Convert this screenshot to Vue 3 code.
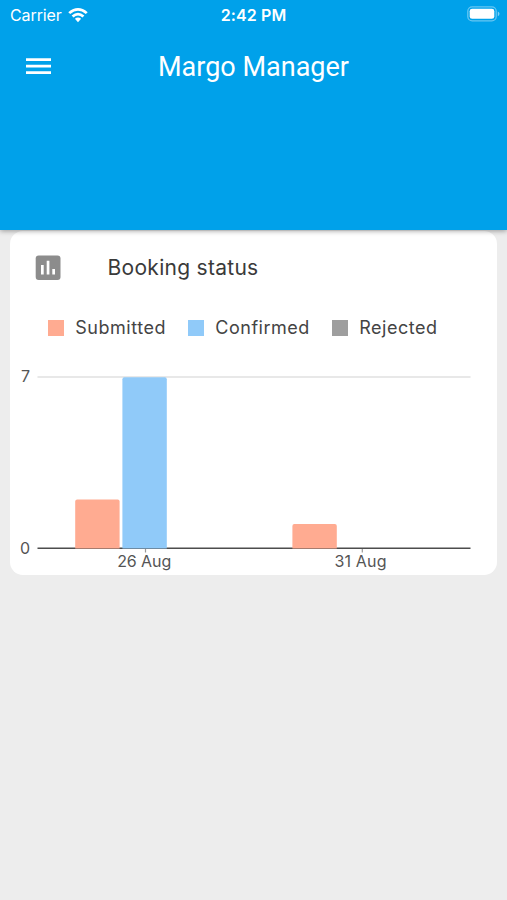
<script setup>
const legend = [
  { name: 'Submitted', color: '#ffab91' },
  { name: 'Confirmed', color: '#90caf9' },
  { name: 'Rejected', color: '#9e9e9e' },
]
const baseline = 181.5
const unit = 24.45
const bars = [
  { x: 65.2, value: 2, color: '#ffab91' },
  { x: 112.4, value: 7, color: '#90caf9' },
  { x: 282.4, value: 1, color: '#ffab91' },
]
const ticks = [
  { x: 135.5, label: '26 Aug', textX: 107.2, width: 54 },
  { x: 352.3, label: '31 Aug', textX: 324.5, width: 52 },
]
function barPath(b) {
  const h = b.value * unit
  return `M${b.x} ${baseline}v${2 - h}q0 -2 2 -2h40.4q2 0 2 2v${h - 2}z`
}
</script>

<template>
  <div class="screen">
    <header class="header">
      <div class="status">
        <div class="carrier">
          <span class="carrier-name">Carrier</span>
          <svg class="wifi" width="20" height="15" viewBox="0 0 20 15">
            <path d="M.3 4.2Q10-4.2 19.7 4.2L17.8 6.1Q10-.6 2.2 6.1ZM3.6 7.5Q10 2 16.4 7.5L14.5 9.4Q10 5.6 5.5 9.4ZM6.9 10.8Q10 8.3 13.1 10.8L10 14.3Z" fill="#fff" />
          </svg>
        </div>
        <span class="time">2:42 PM</span>
        <svg class="battery" width="33" height="16" viewBox="0 0 33 16">
          <rect x=".8" y=".8" width="28.4" height="14" rx="4.4" fill="none" stroke="#fff" stroke-opacity=".4" stroke-width="1.3" />
          <rect x="2.7" y="2.8" width="24.6" height="10" rx="2.4" fill="#fff" />
          <path d="M30.8 5.4q1.7.8 1.7 2.4t-1.7 2.4z" fill="#fff" fill-opacity=".5" />
        </svg>
      </div>
      <div class="toolbar">
        <svg class="menu" width="25" height="18" viewBox="0 0 25 18">
          <path d="M0 .2h25v2.8H0zM0 6.8h25v2.8H0zM0 13.3h25v2.8H0z" fill="#fff" />
        </svg>
        <h1 class="title">Margo Manager</h1>
      </div>
    </header>
    <main class="card">
      <div class="card-head">
        <svg width="26" height="26" viewBox="0 0 26 26">
          <rect x=".7" y=".4" width="24.8" height="24.6" rx="3" fill="#8c8c8c" />
          <path d="M6 10h2.7v9.4H6zM11.7 5.8h2.7v13.6h-2.7zM17.3 14.1H20v5.3h-2.7z" fill="#fff" />
        </svg>
        <h2 class="card-title">Booking status</h2>
      </div>
      <ul class="legend">
        <li v-for="l in legend" :key="l.name">
          <i class="swatch" :style="{ background: l.color }"></i><span>{{ l.name }}</span>
        </li>
      </ul>
      <svg class="chart" width="487" height="214" viewBox="0 0 487 214">
        <path d="M27.5 10.1H460.5" stroke="#e0e0e0" stroke-width="1.5" />
        <path d="M27.5 181.3H460.5" stroke="#4d4d4d" stroke-width="1.4" />
        <path v-for="b in bars" :key="b.x" :d="barPath(b)" :fill="b.color" />
        <g v-for="t in ticks" :key="t.label">
          <path :d="`M${t.x} 182v3.6`" stroke="#999" stroke-width="1.2" />
          <text :x="t.textX" y="200.2" :textLength="t.width">{{ t.label }}</text>
        </g>
        <text x="11" y="15.4">7</text>
        <text x="10" y="187">0</text>
      </svg>
    </main>
  </div>
</template>

<style>
body { margin: 0; background: #ededed; }
</style>

<style scoped>
.screen { height: 900px; overflow: hidden; background: #ededed; font-family: Inter, sans-serif; }
.header { position: relative; z-index: 1; height: 230px; background: #00a1ea; box-shadow: 0 1px 5px rgba(0, 0, 0, .36); color: #fff; }
.status { display: grid; grid-template-columns: 1fr auto 1fr; height: 30px; align-items: center; padding: 0 7px 0 7px; font-size: 16px; box-sizing: border-box; }
.carrier { display: flex; align-items: center; gap: 6px; padding-left: 3px; }
.carrier-name { font-size: 16px; letter-spacing: -.1px; }
.time { font-weight: 600; letter-spacing: .1px; }
.battery { justify-self: end; margin-top: -2px; }
.toolbar { display: grid; grid-template-columns: 26px 1fr 26px; align-items: center; height: 74px; padding: 0 26px; }
.title { margin: 0; text-align: center; font: 400 27px/32px Roboto, sans-serif; }
.card { width: 487px; height: 344px; margin: 1px auto 0; border-radius: 13px; background: #fff; overflow: hidden; }
.card-head { display: flex; align-items: center; height: 74px; padding-left: 25px; gap: 46.6px; }
.card-title { margin: 0; font-size: 21px; font-weight: 400; line-height: 28px; letter-spacing: .28px; color: #3a3a3a; }
.legend { display: flex; gap: 22px; height: 46px; margin: 0; padding: 0 0 0 38px; align-items: center; list-style: none; font-size: 18px; letter-spacing: .52px; color: #444; }
.legend li { display: flex; align-items: center; gap: 11.3px; }
.legend span { margin-top: -1px; }
.swatch { width: 16px; height: 16px; }
.chart { display: block; margin-top: 16px; }
.chart text { font: 400 16px Inter, sans-serif; fill: #555; }
</style>
